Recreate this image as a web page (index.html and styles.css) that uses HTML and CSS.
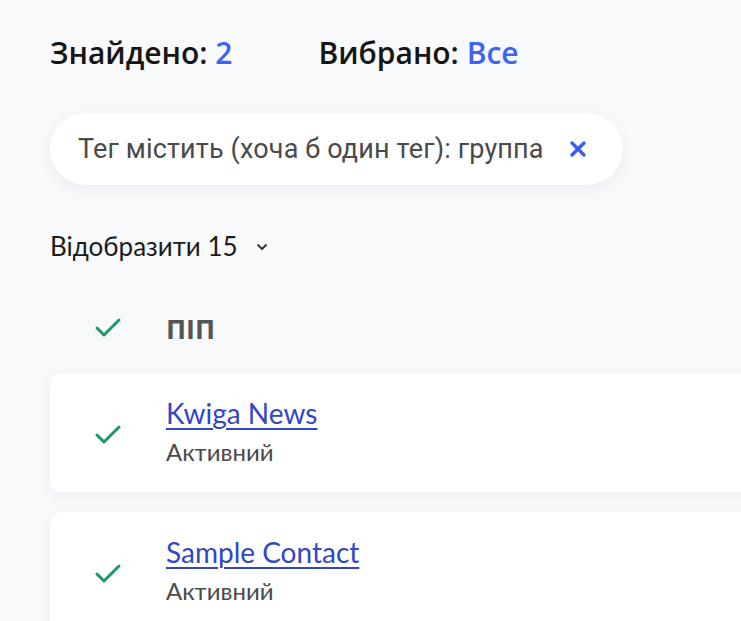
FILE: index.html
```html
<!DOCTYPE html>
<html lang="uk">
<head>
<meta charset="utf-8">
<link rel="stylesheet" href="styles.css">
</head>
<body>
<main class="page">
  <div class="summary">
    <div class="stat">Знайдено: <span class="accent">2</span></div>
    <div class="stat">Вибрано: <span class="accent">Все</span></div>
  </div>
  <div class="filters">
    <div class="chip">
      <span class="chip-text">Тег містить (хоча б один тег): группа</span>
      <svg class="chip-x" width="18" height="18" viewBox="0 0 18 18"><path d="M3 3 L15 15 M15 3 L3 15" stroke="#3b5bfd" stroke-width="3.4" stroke-linecap="round"/></svg>
    </div>
  </div>
  <div class="perpage">
    <span>Відобразити 15</span>
    <svg class="chev" width="14" height="10" viewBox="0 0 14 10"><path d="M3 3 L7 7 L11 3" fill="none" stroke="#333" stroke-width="1.8" stroke-linecap="round" stroke-linejoin="round"/></svg>
  </div>
  <div class="table">
    <div class="row head">
      <div class="cell-check"><svg width="28" height="22" viewBox="0 0 28 22"><path d="M3 11 L10 18 L25 3" fill="none" stroke="#1a9a6c" stroke-width="3" stroke-linecap="round" stroke-linejoin="round"/></svg></div>
      <div class="cell-name"><span class="th">ПІП</span></div>
    </div>
    <div class="row card">
      <div class="cell-check"><svg width="28" height="22" viewBox="0 0 28 22"><path d="M3 11 L10 18 L25 3" fill="none" stroke="#1a9a6c" stroke-width="3" stroke-linecap="round" stroke-linejoin="round"/></svg></div>
      <div class="cell-name">
        <a class="name" href="#">Kwiga News</a>
        <div class="status">Активний</div>
      </div>
    </div>
    <div class="row card">
      <div class="cell-check"><svg width="28" height="22" viewBox="0 0 28 22"><path d="M3 11 L10 18 L25 3" fill="none" stroke="#1a9a6c" stroke-width="3" stroke-linecap="round" stroke-linejoin="round"/></svg></div>
      <div class="cell-name">
        <a class="name" href="#">Sample Contact</a>
        <div class="status">Активний</div>
      </div>
    </div>
  </div>
</main>
</body>
</html>
```
FILE: styles.css
```css
html, body {
  margin: 0;
  padding: 0;
  background: #f8f9fb;
  overflow: hidden;
}
body {
  font-family: Lato, "Noto Sans", sans-serif;
  color: #1b1b1b;
}
.page {
  padding: 34px 0 0 50px;
  width: 691px;
  overflow: hidden;
}
.summary {
  display: flex;
  gap: 86px;
  height: 36px;
  align-items: center;
}
.stat {
  font-family: "Open Sans", sans-serif;
  font-weight: 600;
  font-size: 30px;
  color: #151515;
}
.accent {
  color: #3d63f5;
  font-weight: 600;
}
.filters {
  margin-top: 43px;
  display: flex;
}
.chip {
  display: flex;
  align-items: center;
  height: 72px;
  box-sizing: border-box;
  padding: 0 36px 0 28px;
  background: #fff;
  border-radius: 36px;
  box-shadow: 0 4px 14px rgba(30, 40, 80, 0.06);
}
.chip-text {
  font-family: Roboto, sans-serif;
  font-size: 27px;
  letter-spacing: 0.15px;
  color: #4a4a4a;
}
.chip-x {
  margin-left: 25px;
}
.perpage {
  margin-top: 45px;
  display: flex;
  align-items: center;
  font-size: 26px;
  color: #1b1b1b;
  height: 32px;
}
.chev {
  margin-left: 17px;
  margin-top: 2px;
}
.table {
  margin-top: 36px;
  display: flex;
  flex-direction: column;
  gap: 20px;
  margin-right: -60px;
}
.row {
  display: flex;
  align-items: center;
}
.head {
  height: 60px;
  margin-bottom: -5px;
}
.card {
  background: #fff;
  border-radius: 12px;
  height: 119px;
  box-shadow: 0 4px 14px rgba(30, 40, 80, 0.05);
}
.cell-check {
  width: 116px;
  display: flex;
  justify-content: center;
}
.card .cell-name {
  margin-top: -4px;
}
.card .cell-check {
  margin-top: 4px;
}
.cell-name {
  display: flex;
  flex-direction: column;
}
.th {
  font-family: "Open Sans", sans-serif;
  font-weight: 700;
  font-size: 27px;
  color: #555;
}
.name {
  font-size: 28px;
  color: #3346c4;
  text-decoration: underline;
  text-decoration-thickness: 2px;
  text-underline-offset: 4px;
  line-height: 34px;
}
.status {
  margin-top: 7px;
  font-size: 24px;
  color: #4a4a4a;
}
```
